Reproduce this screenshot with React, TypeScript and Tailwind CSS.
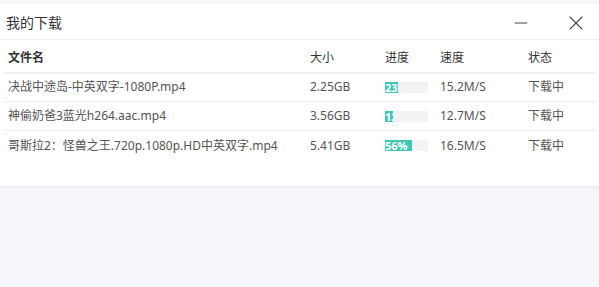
import { Minus, X } from 'lucide-react'

type Row = { name: string; size: string; progress: number; fill: number; speed: string; status: string }

const rows: Row[] = [
  { name: '决战中途岛-中英双字-1080P.mp4', size: '2.25GB', progress: 23, fill: 13, speed: '15.2M/S', status: '下载中' },
  { name: '神偷奶爸3蓝光h264.aac.mp4', size: '3.56GB', progress: 12, fill: 8, speed: '12.7M/S', status: '下载中' },
  { name: '哥斯拉2：怪兽之王.720p.1080p.HD中英双字.mp4', size: '5.41GB', progress: 56, fill: 27, speed: '16.5M/S', status: '下载中' },
]

const cols = 'grid grid-cols-[302px_75px_55px_88px_1fr] items-center pl-1'

export default function App() {
  return (
    <div
      className="w-[599px] h-[287px] bg-[#f5f6fa] pt-1 overflow-hidden"
      style={{ fontFamily: '"Noto Sans", "Noto Sans CJK SC", sans-serif' }}
    >
      <div className="bg-white h-[182px] shadow-[0_1px_2px_rgba(0,0,0,0.06)]">
        {/* title bar */}
        <div className="h-9 flex items-center pl-1.5 pr-[11px] pt-0.5 border-b border-[#f0f0f0]">
          <span className="text-[14px] text-[#333]">我的下载</span>
          <div className="ml-auto flex items-center gap-[33px] text-[#444]">
            <Minus className="w-5 h-5" strokeWidth={1.2} />
            <X className="w-6 h-6" strokeWidth={1.1} />
          </div>
        </div>

        {/* table */}
        <div className="mx-1">
          <div className={`${cols} h-[33px] pt-[3px] text-[12px] text-[#333] border-b border-[#ececec] shadow-[0_1px_2px_rgba(0,0,0,0.05)]`}>
            <span className="font-bold">文件名</span>
            <span>大小</span>
            <span>进度</span>
            <span>速度</span>
            <span>状态</span>
          </div>
          {rows.map((r, i) => (
            <div
              key={r.name}
              className={`${cols} h-[29px] text-[12px] text-[#555] ${i < rows.length - 1 ? 'border-b border-[#ededed]' : ''}`}
            >
              <span className="truncate">{r.name}</span>
              <span>{r.size}</span>
              <div className="w-[43px] h-[11px] bg-[#f3f3f3] overflow-hidden">
                <div
                  className="h-full bg-[#3ec7b7] text-white text-[11px] leading-[11px] font-bold overflow-hidden whitespace-nowrap"
                  style={{ width: r.fill }}
                >
                  {r.progress}%
                </div>
              </div>
              <span>{r.speed}</span>
              <span>{r.status}</span>
            </div>
          ))}
        </div>
      </div>
    </div>
  )
}
